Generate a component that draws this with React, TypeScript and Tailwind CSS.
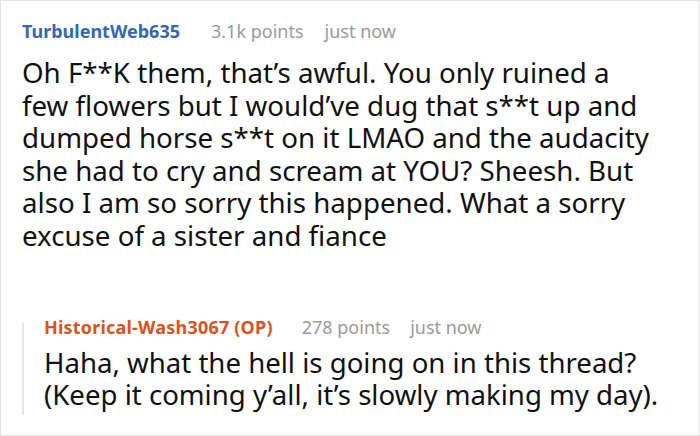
import React from "react";

export default function App() {
  return (
    <div
      className="w-[700px] h-[436px] border border-[#e3e3e3] bg-white box-border overflow-hidden"
      style={{ fontFamily: '"Noto Sans", "Open Sans", sans-serif' }}
    >
      <div className="pl-[21px] pr-2 pt-[18px]">
        <div className="flex items-baseline text-[18px] leading-[24px]">
          <span className="font-bold text-[#3667b1]">TurbulentWeb635</span>
          <span className="ml-[31px] text-[#9a9a9a]">3.1k points</span>
          <span className="ml-[21px] text-[#9a9a9a]">just now</span>
        </div>
        <p className="mt-[13px] text-[27.7px] leading-[32.6px] text-[#111] w-[640px]">
          Oh F**K them, that’s awful. You only ruined a few flowers but I would’ve dug that s**t up and dumped horse s**t on it LMAO and the audacity she had to cry and scream at YOU? Sheesh. But also I am so sorry this happened. What a sorry excuse of a sister and fiance
        </p>
        <div className="mt-[63px] flex">
          <div className="w-[2px] bg-[#e6e6e6] mt-[8px] mb-[-4px]" />
          <div className="pl-[20px]">
            <div className="flex items-baseline text-[18px] leading-[24px]">
              <span className="font-bold text-[#d9531f] tracking-[0.2px]">Historical-Wash3067 (OP)</span>
              <span className="ml-[29px] text-[#9a9a9a]">278 points</span>
              <span className="ml-[20px] text-[#9a9a9a]">just now</span>
            </div>
            <p className="mt-[7px] text-[27.6px] leading-[32.6px] text-[#111]">
              Haha, what the hell is going on in this thread?
              <br />
              (Keep it coming y’all, it’s slowly making my day).
            </p>
          </div>
        </div>
      </div>
    </div>
  );
}
